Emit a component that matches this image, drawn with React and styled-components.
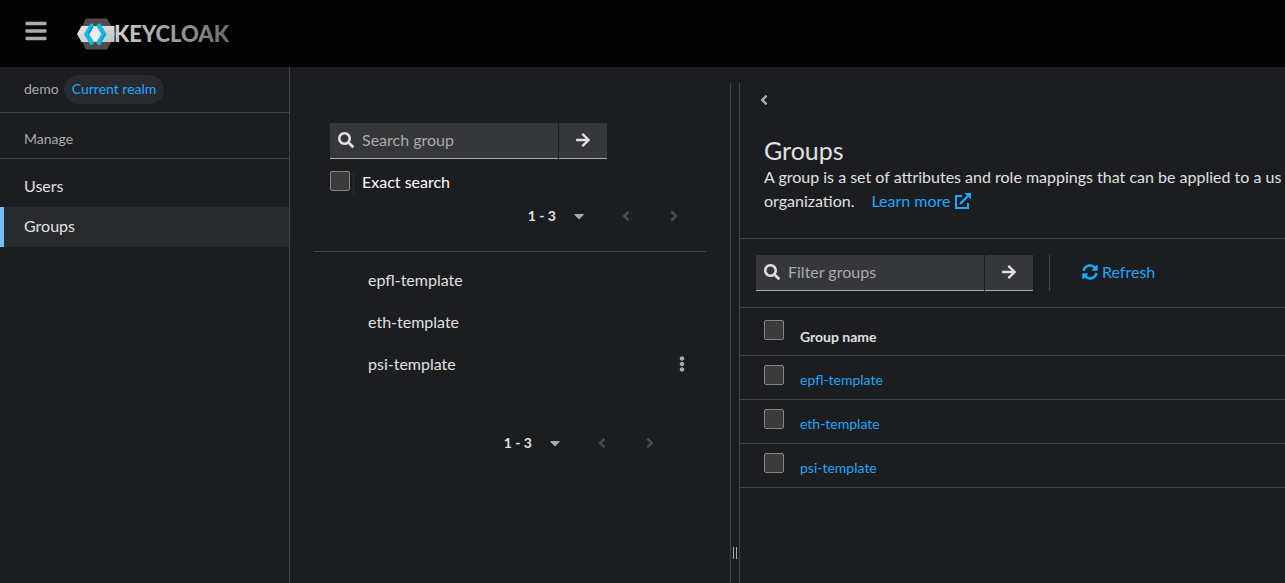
import React from "react";
import styled, { createGlobalStyle } from "styled-components";
import {
  FaBars,
  FaSearch,
  FaArrowRight,
  FaCaretDown,
  FaAngleLeft,
  FaAngleRight,
  FaEllipsisV,
  FaSyncAlt,
} from "react-icons/fa";

const color = {
  page: "#1b1d21",
  black: "#030303",
  raised: "#36373a",
  selected: "#292a2d",
  line: "#444548",
  text: "#e0e0e0",
  muted: "#aaabac",
  disabled: "#4a4c50",
  link: "#1fa7f8",
  accent: "#73bcf7",
};

const GlobalStyle = createGlobalStyle`
  * { box-sizing: border-box; }
  body {
    margin: 0;
    background: ${color.page};
    color: ${color.text};
    font-family: Lato, "Open Sans", sans-serif;
    font-size: 16px;
    line-height: 24px;
  }
  button, input { font: inherit; color: inherit; }
  button { background: none; border: 0; padding: 0; cursor: pointer; }
  a { color: ${color.link}; text-decoration: none; }
  ul { list-style: none; margin: 0; padding: 0; }
  svg { display: block; }
`;

const Page = styled.div`
  display: flex;
  flex-direction: column;
  height: 100vh;
  overflow: hidden;
`;

const Masthead = styled.header`
  display: flex;
  align-items: center;
  gap: 29px;
  height: 67px;
  flex: none;
  padding: 0 24px;
  background: ${color.black};
`;

const MenuButton = styled.button`
  padding-bottom: 6px;
  font-size: 24px;
  color: ${color.muted};
`;

const Body = styled.div`
  display: flex;
  flex: 1;
  min-height: 0;
`;

const Sidebar = styled.nav`
  width: 290px;
  flex: none;
  border-right: 1px solid ${color.line};
`;

const Realm = styled.div`
  display: flex;
  align-items: baseline;
  gap: 5px;
  height: 46px;
  padding: 8px 24px 0;
  border-bottom: 1px solid ${color.line};
  color: ${color.muted};
  font-size: 14px;
`;

const RealmBadge = styled.span`
  padding: 2px 8px 3px;
  border-radius: 16px;
  background: ${color.selected};
  color: ${color.link};
`;

const SectionTitle = styled.h2`
  margin: 0 0 8px;
  padding: 14px 24px 7px;
  border-bottom: 1px solid ${color.line};
  color: ${color.muted};
  font-size: 14px;
  font-weight: 400;
`;

const NavLink = styled.a`
  display: block;
  padding: 7px 20px 9px;
  border-left: 4px solid ${(p) => (p.$current ? color.accent : "transparent")};
  background: ${(p) => (p.$current ? color.selected : "transparent")};
  color: ${color.text};
`;

const Main = styled.main`
  display: flex;
  flex: 1;
  min-width: 0;
  padding-top: 16px;
`;

const TreePanel = styled.section`
  width: 440px;
  flex: none;
  padding: 40px 24px 0;
`;

const TreeToolbar = styled.div`
  height: 129px;
  padding: 0 16px;
  border-bottom: 1px solid ${color.line};
`;

const SearchForm = styled.form`
  display: flex;
  gap: 1px;
  width: 277px;
  height: 36px;
`;

const SearchField = styled.label`
  display: flex;
  flex: 1;
  min-width: 0;
  align-items: center;
  gap: 8px;
  padding: 0 8px 2px;
  border-bottom: 1px solid ${color.muted};
  background: ${color.raised};
`;

const SearchInput = styled.input`
  flex: 1;
  min-width: 0;
  padding: 0;
  border: 0;
  outline: 0;
  background: transparent;
  &::placeholder { color: ${color.muted}; opacity: 1; }
`;

const SubmitButton = styled.button`
  display: flex;
  align-items: center;
  justify-content: center;
  width: 48px;
  padding-bottom: 2px;
  border-bottom: 1px solid ${color.muted};
  background: ${color.raised};
`;

const Tick = styled.input.attrs({ type: "checkbox" })`
  appearance: none;
  display: block;
  width: 20px;
  height: 20px;
  margin: 0;
  border: 1px solid #858585;
  border-radius: 2px;
  background: #3b3b3b;
`;

const ExactSearch = styled.label`
  display: flex;
  align-items: flex-start;
  gap: 3px;
  margin-top: 12px;
  color: #fff;
`;

const ExactText = styled.span`
  padding: 0 0 2px 8px;
  border-left: 1px solid ${color.selected};
  line-height: 22px;
`;

const Pager = styled.div`
  display: flex;
  align-items: center;
  justify-content: flex-end;
  height: 36px;
  margin-top: ${(p) => p.$top};
  margin-right: ${(p) => p.$right};
  font-size: 14px;
`;

const PagerToggle = styled.button`
  display: flex;
  align-items: center;
  gap: 15px;
  margin-right: 15px;
  font-weight: 700;
  svg { font-size: 16px; color: ${color.muted}; }
`;

const PagerStep = styled.button`
  display: flex;
  justify-content: center;
  width: 48px;
  font-size: 16px;
  color: ${color.disabled};
`;

const TreeList = styled.ul`
  padding: 7px 16px 0 54px;
`;

const TreeItem = styled.li`
  display: flex;
  align-items: center;
  justify-content: space-between;
  height: 42px;
`;

const KebabButton = styled.button`
  display: flex;
  justify-content: center;
  width: 16px;
  color: ${color.muted};
`;

const Splitter = styled.div`
  display: flex;
  align-items: flex-end;
  justify-content: center;
  width: 10px;
  flex: none;
  padding-bottom: 24px;
  border: solid ${color.line};
  border-width: 0 1px;
`;

const Grip = styled.span`
  width: 4px;
  height: 12px;
  border: solid ${color.muted};
  border-width: 0 1px;
`;

const Detail = styled.section`
  flex: 1;
  min-width: 0;
  overflow: hidden;
`;

const DetailHeader = styled.header`
  padding: 9px 24px 25px;
  border-bottom: 1px solid ${color.line};
`;

const BackButton = styled.button`
  display: block;
  margin-left: -8px;
  color: ${color.muted};
`;

const Title = styled.h1`
  margin: 27px 0 0;
  font-size: 25px;
  line-height: 30px;
  font-weight: 400;
`;

const Intro = styled.p`
  width: max-content;
  margin: 0;
`;

const IconLink = styled.a`
  display: inline-flex;
  align-items: center;
  gap: 4px;
  margin-left: 17px;
  vertical-align: top;
`;

const DetailToolbar = styled.div`
  display: flex;
  padding: 16px;
  border-bottom: 1px solid ${color.line};
`;

const ToolbarDivider = styled.span`
  width: 1px;
  margin: 0 32px 0 16px;
  background: ${color.line};
`;

const RefreshButton = styled.button`
  display: flex;
  align-items: center;
  gap: 4px;
  padding-bottom: 2px;
  color: ${color.link};
`;

const Table = styled.table`
  width: 100%;
  border-collapse: separate;
  border-spacing: 0;
  font-size: 14px;
  th, td {
    height: 44px;
    padding: 4px 0 0;
    border-bottom: 1px solid ${color.line};
    text-align: left;
  }
  th { height: 48px; padding-top: 10px; }
`;

const TickHead = styled.th`
  && {
    width: 60px;
    padding-top: 12px;
    vertical-align: top;
  }
`;

const TickSlot = styled.span`
  display: block;
  height: 30px;
  padding-left: 24px;
`;

const Logo = () => (
  <svg width="154" height="32" viewBox="0 0 154 32" role="img" aria-label="Keycloak">
    <defs>
      <linearGradient id="word" gradientUnits="userSpaceOnUse" x1="36" x2="153" y1="0" y2="0">
        <stop offset="0" stopColor="#d0d0d0" />
        <stop offset="1" stopColor="#6a6a6a" />
      </linearGradient>
      <linearGradient id="band" x1="0" x2="1" y1="0" y2="1">
        <stop offset="0" stopColor="#e8e8e8" />
        <stop offset="1" stopColor="#c4c4c4" />
      </linearGradient>
    </defs>
    <path d="M9 0.5H30L39 16L30 31.5H9L1 16Z" fill="#4d4d4d" />
    <path d="M4.500 8H37.500V24H4.500L0 16Z" fill="url(#band)" />
    <path d="M14 9H22L27 16L22 23H14L10 16Z" fill="#ececec" />
    <g fill="none" strokeWidth="4.600" strokeLinecap="round" strokeLinejoin="round">
      <path d="M14.500 8L9.500 16L14.500 24.500" stroke="#19b9e6" />
      <path d="M22 8L27 16L22 24.500" stroke="#19b9e6" />
    </g>
    <g fill="none" strokeWidth="1.400" strokeLinecap="round">
      <path d="M15.500 9L11.500 16" stroke="#0b86ad" />
      <path d="M23.500 23.500L28 16" stroke="#0b9cc8" />
    </g>
    <text x="37" y="24" fill="url(#word)" fontFamily="Lato, sans-serif" fontWeight="900" fontSize="22">KEYCLOAK</text>
  </svg>
);

const ExternalIcon = () => (
  <svg width="16" height="16" viewBox="0 0 16 16" aria-hidden="true">
    <path d="M7 3H1V15H13V10" fill="none" stroke="currentColor" strokeWidth="2" />
    <path d="M5 11L13 3" stroke="currentColor" strokeWidth="2.400" />
    <path d="M9.500 0H16V6.500Z" fill="currentColor" />
  </svg>
);

const Search = ({ label }) => (
  <SearchForm role="search" onSubmit={(e) => e.preventDefault()}>
    <SearchField>
      <FaSearch aria-hidden="true" />
      <SearchInput type="text" aria-label={label} placeholder={label} />
    </SearchField>
    <SubmitButton type="submit" aria-label="Search">
      <FaArrowRight />
    </SubmitButton>
  </SearchForm>
);

const Pagination = ({ top, right }) => (
  <Pager $top={top} $right={right}>
    <PagerToggle type="button">
      1 - 3
      <FaCaretDown />
    </PagerToggle>
    <PagerStep type="button" disabled aria-label="Previous page">
      <FaAngleLeft />
    </PagerStep>
    <PagerStep type="button" disabled aria-label="Next page">
      <FaAngleRight />
    </PagerStep>
  </Pager>
);

const groups = ["epfl-template", "eth-template", "psi-template"];

export default function App() {
  return (
    <Page>
      <GlobalStyle />
      <Masthead>
        <MenuButton type="button" aria-label="Global navigation">
          <FaBars />
        </MenuButton>
        <Logo />
      </Masthead>
      <Body>
        <Sidebar>
          <Realm>
            demo <RealmBadge>Current realm</RealmBadge>
          </Realm>
          <SectionTitle>Manage</SectionTitle>
          <ul>
            <li><NavLink href="#users">Users</NavLink></li>
            <li><NavLink href="#groups" $current aria-current="page">Groups</NavLink></li>
          </ul>
        </Sidebar>
        <Main>
          <TreePanel>
            <TreeToolbar>
              <Search label="Search group" />
              <ExactSearch>
                <Tick />
                <ExactText>Exact search</ExactText>
              </ExactSearch>
              <Pagination top="3px" right="-8px" />
            </TreeToolbar>
            <TreeList>
              {groups.map((name, i) => (
                <TreeItem key={name}>
                  {name}
                  {i === 2 && (
                    <KebabButton type="button" aria-label="Actions">
                      <FaEllipsisV />
                    </KebabButton>
                  )}
                </TreeItem>
              ))}
            </TreeList>
            <Pagination top="40px" right="32px" />
          </TreePanel>
          <Splitter role="separator" aria-orientation="vertical">
            <Grip />
          </Splitter>
          <Detail>
            <DetailHeader>
              <BackButton type="button" aria-label="Hide groups">
                <FaAngleLeft />
              </BackButton>
              <Title>Groups</Title>
              <Intro>
                A group is a set of attributes and role mappings that can be applied to a us
                <br />
                organization.
                <IconLink href="#learn">
                  Learn more <ExternalIcon />
                </IconLink>
              </Intro>
            </DetailHeader>
            <DetailToolbar>
              <Search label="Filter groups" />
              <ToolbarDivider />
              <RefreshButton type="button">
                <FaSyncAlt />
                Refresh
              </RefreshButton>
            </DetailToolbar>
            <Table>
              <thead>
                <tr>
                  <TickHead><TickSlot><Tick aria-label="Select all" /></TickSlot></TickHead>
                  <th>Group name</th>
                </tr>
              </thead>
              <tbody>
                {groups.map((name) => (
                  <tr key={name}>
                    <td><TickSlot><Tick aria-label={`Select ${name}`} /></TickSlot></td>
                    <td><a href={`#${name}`}>{name}</a></td>
                  </tr>
                ))}
              </tbody>
            </Table>
          </Detail>
        </Main>
      </Body>
    </Page>
  );
}
